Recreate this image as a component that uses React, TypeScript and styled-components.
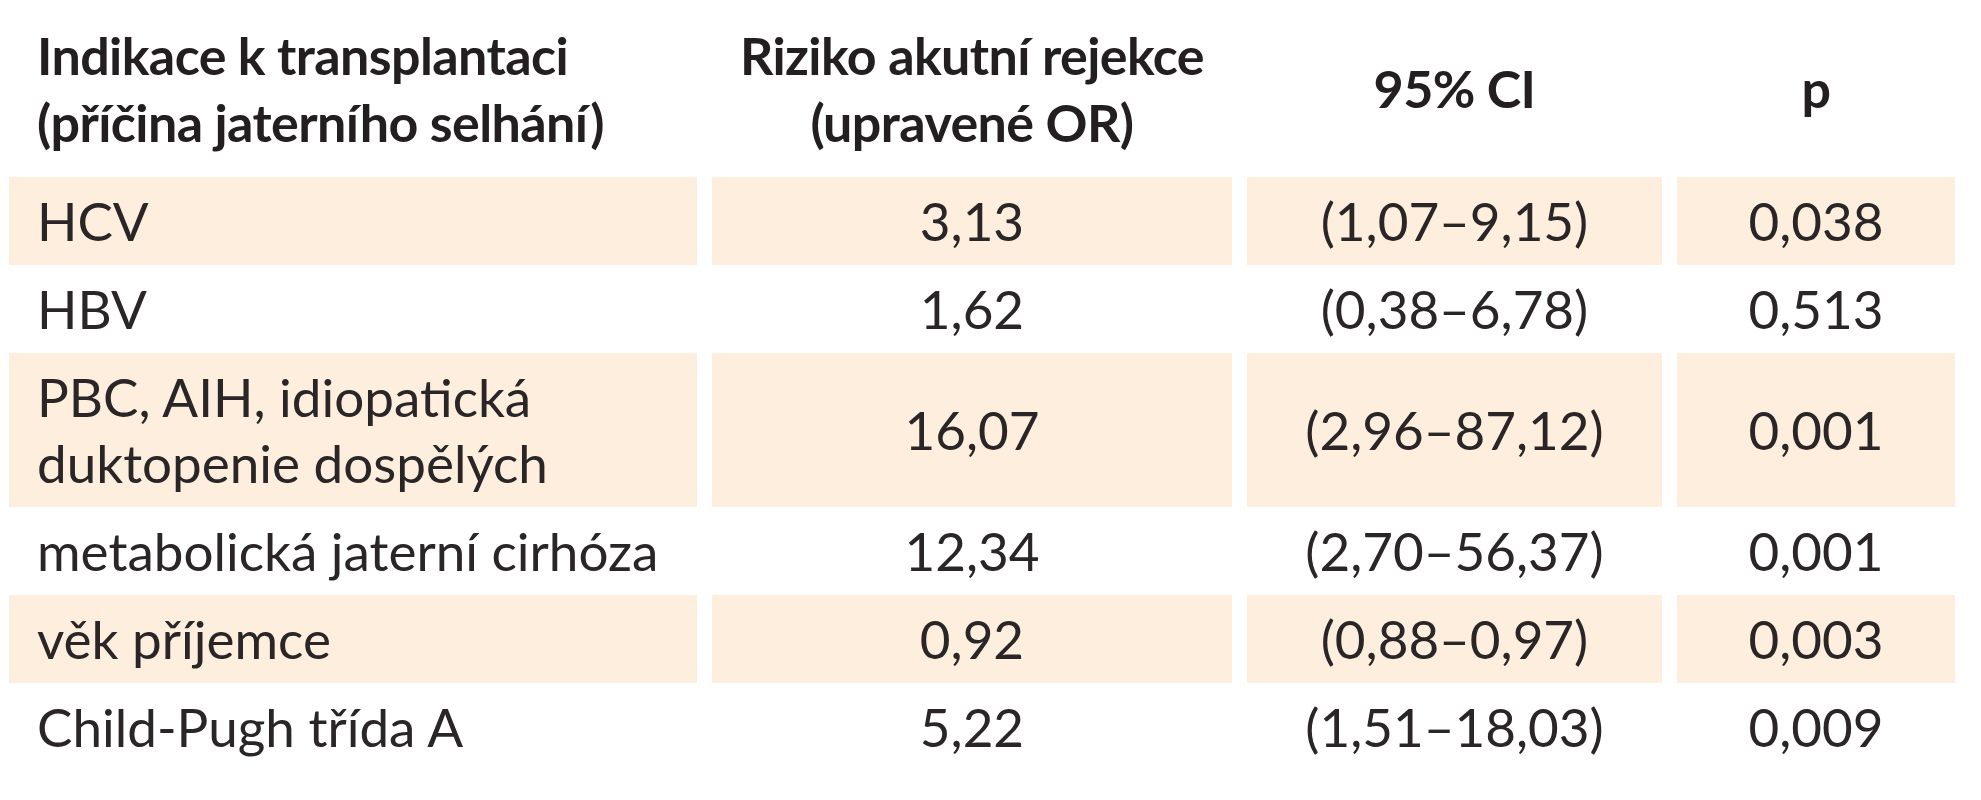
import React from 'react';
import styled, { createGlobalStyle } from 'styled-components';

const GlobalStyle = createGlobalStyle`
  html, body {
    margin: 0;
    padding: 0;
    background: #ffffff;
  }
  body {
    font-family: Lato, 'Liberation Sans', Arial, sans-serif;
    color: #231f20;
  }
`;

type Row = {
  label: string[];
  or: string;
  ci: string;
  p: string;
};

const rows: Row[] = [
  { label: ['HCV'], or: '3,13', ci: '(1,07–9,15)', p: '0,038' },
  { label: ['HBV'], or: '1,62', ci: '(0,38–6,78)', p: '0,513' },
  {
    label: ['PBC, AIH, idiopatická', 'duktopenie dospělých'],
    or: '16,07',
    ci: '(2,96–87,12)',
    p: '0,001',
  },
  { label: ['metabolická jaterní cirhóza'], or: '12,34', ci: '(2,70–56,37)', p: '0,001' },
  { label: ['věk příjemce'], or: '0,92', ci: '(0,88–0,97)', p: '0,003' },
  { label: ['Child-Pugh třída A'], or: '5,22', ci: '(1,51–18,03)', p: '0,009' },
];

export default function App() {
  return (
    <>
      <GlobalStyle />
      <Table>
        <HeaderRow>
          <HeadCell>
            Indikace k transplantaci
            <br />
            (příčina jaterního selhání)
          </HeadCell>
          <HeadCell $center>
            Riziko akutní rejekce
            <br />
            (upravené OR)
          </HeadCell>
          <HeadCell $center>95% CI</HeadCell>
          <HeadCell $center>p</HeadCell>
        </HeaderRow>

        {rows.map((row, i) => {
          const shaded = i % 2 === 0;
          return (
            <BodyRow key={row.label.join(' ')}>
              <Cell $shaded={shaded}>
                {row.label.map((line, j) => (
                  <React.Fragment key={line}>
                    {j > 0 && <br />}
                    {line}
                  </React.Fragment>
                ))}
              </Cell>
              <Cell $shaded={shaded} $center>
                {row.or}
              </Cell>
              <Cell $shaded={shaded} $center>
                {row.ci}
              </Cell>
              <Cell $shaded={shaded} $center>
                {row.p}
              </Cell>
            </BodyRow>
          );
        })}
      </Table>
    </>
  );
}

const Table = styled.div`
  display: flex;
  flex-direction: column;
  width: 1946px;
  padding-left: 9px;
`;

const HeaderRow = styled.div`
  display: grid;
  grid-template-columns: 688px 520px 415px 278px;
  column-gap: 15px;
  height: 177px;
  align-items: center;
`;

const BodyRow = styled.div`
  display: grid;
  grid-template-columns: 688px 520px 415px 278px;
  column-gap: 15px;
`;

const HeadCell = styled.div<{ $center?: boolean }>`
  font-size: 52px;
  line-height: 67px;
  font-weight: 700;
  letter-spacing: -0.6px;
  color: #231f20;
  text-align: ${(p) => (p.$center ? 'center' : 'left')};
  padding-left: ${(p) => (p.$center ? '0' : '28px')};
`;

const Cell = styled.div<{ $shaded?: boolean; $center?: boolean }>`
  display: flex;
  flex-direction: column;
  justify-content: center;
  align-items: ${(p) => (p.$center ? 'center' : 'flex-start')};
  background: ${(p) => (p.$shaded ? '#fdeedd' : 'transparent')};
  font-size: 53px;
  line-height: 66px;
  font-weight: 400;
  color: #2a2627;
  padding: 11px 0 11px ${(p) => (p.$center ? '0' : '28px')};
  text-align: ${(p) => (p.$center ? 'center' : 'left')};
`;
